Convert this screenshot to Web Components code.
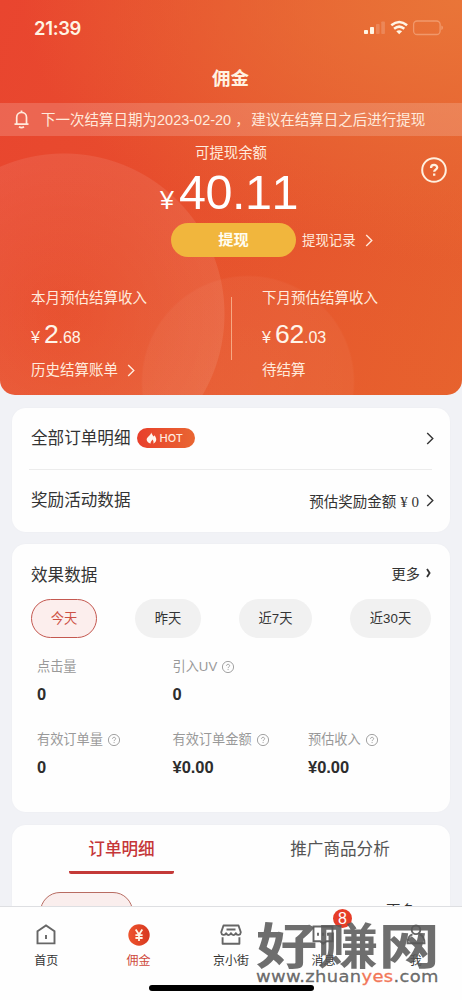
<!DOCTYPE html>
<html lang="zh-CN">
<head>
<meta charset="utf-8">
<title>佣金</title>
<style>
html,body{margin:0;padding:0;background:#f1f2f6}
body{font-family:"Liberation Sans","Noto Sans CJK SC",sans-serif;font-kerning:none;width:462px;height:1000px;overflow:hidden}
</style>
</head>
<body>
<commission-app></commission-app>
<script>
const define = (name, html) => {
  const t = document.createElement('template');
  t.innerHTML = html;
  customElements.define(name, class extends HTMLElement {
    constructor() {
      super();
      this.attachShadow({mode: 'open'}).append(t.content.cloneNode(true));
    }
  });
};

define('chevron-icon', `<style>:host{display:block;width:8px;height:14px;color:inherit}svg{display:block;width:100%;height:100%}</style>
<svg viewBox="0 0 8 14" fill="none" stroke="currentColor" stroke-width="1.5"><path d="M1 1l6 6-6 6"/></svg>`);

define('help-icon', `<style>:host{display:block;width:12px;height:12px}svg{display:block;width:100%;height:100%;overflow:visible}</style>
<svg viewBox="0 0 12 12" fill="none" stroke="#999" stroke-width=".9"><circle cx="6" cy="6" r="5.6"/><path d="M4.5 4.8c0-2 3.1-2 3.1-.1 0 1.2-1.5 1.2-1.5 2.4M6.1 8.1v1"/></svg>`);

define('status-bar', `<style>
:host{display:flex;height:56px;box-sizing:border-box;padding:0 19px 0 34px;align-items:center;justify-content:space-between;color:#fff5e4}
b{font:600 18.4px/24px Inter,sans-serif;letter-spacing:-.3px}
svg{display:block}
</style><b>21:39</b>
<svg width="80" height="16" viewBox="363 20 80 16" fill="none">
<g fill="#fff5e4"><rect x="364" y="30" width="4" height="4" rx=".8"/><rect x="370" y="27" width="4" height="7" rx=".8"/></g>
<g fill="#fff" opacity=".17"><rect x="376" y="24" width="3.6" height="10" rx=".8"/><rect x="381.300" y="21.500" width="3.600" height="12.500" rx=".8"/></g>
<g stroke="#fff5e4" stroke-width="2.500"><path d="M391.300 25.300q7.900-6.700 15.800 0"/><path d="M394.100 28.800q5.100-4.400 10.200 0"/></g><path d="M396.300 31.300q2.900-2.200 5.800 0l-2.900 2.900z" fill="#fff5e4"/>
<g opacity=".38"><rect x="413.600" y="21" width="26.500" height="13.500" rx="3.500" stroke="#ffd9c0" stroke-width="1.300"/><path d="M441.300 25.500q1.700.5 1.700 2.300t-1.700 2.300z" fill="#ffd9c0"/></g>
</svg>`);

define('notice-bar', `<style>
:host{display:flex;height:33px;align-items:center;padding-left:14px;background:rgba(255,255,255,.17);color:#ffeadc;font-size:14.500px;line-height:33px;white-space:pre}
svg{display:block;margin-right:12px}
span{padding-top:1px}
i{font-style:normal;display:inline-block;width:20px;text-indent:4px}
</style><svg width="15" height="19" viewBox="0 0 15 19" fill="none" stroke="#ffeadc" stroke-width="1.700"><path d="M2.700 14V7.200a4.900 4.900 0 0 1 9.800 0V14M.5 14.200h14M7.500.600v1.600M5 16.800q2.500 1.800 5 0"/></svg><span>下一次结算日期为2023-02-20<i>，</i>建议在结算日之后进行提现</span>`);

define('income-block', `<style>
:host{display:block;color:#ffebdd;font-size:14.500px}
.l,.f{line-height:20px;height:20px}
.n{display:flex;align-items:baseline;height:36px;line-height:36px;margin:8px 0;color:#fff5e9;font-size:16px}
.n span{margin-right:4px}
::slotted([slot=int]){font-size:26.500px;letter-spacing:-.2px}
::slotted([slot=dec]){font-size:16px}
.f{display:flex;align-items:center;gap:9px}
</style><div class="l"><slot name="label"></slot></div><div class="n"><span>¥</span><slot name="int"></slot><slot name="dec"></slot></div><div class="f"><slot name="foot"></slot></div>`);

define('balance-hero', `<style>
:host{display:block;height:395px;border-radius:0 0 15px 15px;overflow:hidden;color:#ffeadc;
background:radial-gradient(circle at 64px 314px,rgba(255,255,255,.02) 0,rgba(255,255,255,.085) 160px,transparent 161px),radial-gradient(circle at 248px 382px,rgba(255,255,255,.05) 0,rgba(255,255,255,.04) 105px,transparent 107px),linear-gradient(180deg,transparent 40%,rgba(235,110,40,.18) 100%),radial-gradient(ellipse 440px 260px at 100% 0,#e97538 0,rgba(233,103,50,0) 100%),linear-gradient(110deg,#e9452f 0,#e74c2d 35%,#e6552e 65%,#e6602f 100%)}
h1{margin:0;height:47px;font:600 18.500px/45px "Liberation Sans","Noto Sans CJK SC",sans-serif;text-align:center;color:#fff3e3;padding-right:1px}
.lab{height:18px;margin-top:8px;font-size:14.400px;line-height:18px;text-align:center}
.row{display:grid;grid-template-columns:160px 1fr 42px;height:54px;align-items:center;color:#fff}
.amt{display:flex;align-items:baseline;line-height:54px;font-size:48.500px;letter-spacing:-.5px;padding-top:3px}
.amt small{font-size:25px;width:19px}
.q{width:28px;height:28px;align-self:start;margin-top:-6px}
.act{display:flex;height:34px;margin:7px 0 0 171px;align-items:center;font-size:13.400px}
.act>span{margin-top:-2px}
button{width:125px;height:34px;padding:0 0 3px;border:0;border-radius:17px;background:#f1b63d;color:#fffdf0;font:600 15.200px/31px "Noto Sans CJK SC",sans-serif;margin-right:6px}
.act chevron-icon{margin-left:9px;height:13px}
.cols{display:grid;grid-template-columns:200px 1px 1fr;column-gap:0;margin-top:31px;padding-left:31px}
.cols hr{width:1px;height:63px;margin:9px 0 0;border:0;background:#ffd0ac;opacity:.65}
.cols income-block:last-child{margin-left:30px}
.cols chevron-icon{height:13px}
</style>
<status-bar></status-bar><h1>佣金</h1><notice-bar></notice-bar>
<div class="lab">可提现余额</div>
<div class="row"><span></span><div class="amt"><small>¥</small><span>40.11</span></div>
<svg class="q" viewBox="0 0 28 28" fill="none" stroke="#fff0df" stroke-width="2"><circle cx="14" cy="14" r="11.800"/><path stroke-width="2.300" d="M11 12c0-4.200 6.200-3.900 6.200-.500 0 2-3 2.300-3 4.300M14.200 17.500v2.200"/></svg></div>
<div class="act"><button>提现</button><span>提现记录</span><chevron-icon></chevron-icon></div>
<div class="cols"><income-block><span slot="label">本月预估结算收入</span><span slot="int">2</span><span slot="dec">.68</span><span slot="foot">历史结算账单</span><chevron-icon slot="foot"></chevron-icon></income-block><hr>
<income-block><span slot="label">下月预估结算收入</span><span slot="int">62</span><span slot="dec">.03</span><span slot="foot">待结算</span></income-block></div>`);

define('hot-badge', `<style>:host{display:flex;box-sizing:border-box;width:58px;height:20px;border-radius:10px;background:linear-gradient(90deg,#e83f2b,#e96632);color:#ffe9df;align-items:center;padding-left:9px;gap:3px;font:500 11px/20px Inter,sans-serif}svg{display:block}</style>
<svg width="11" height="12" viewBox="0 0 11 12"><path fill="#fff4ed" d="M5.200.500c.500 2.200 2 2.600 2.100 4.100.600-.300.900-.8 1-1.300 3.500 3.700 1.800 7.700-1.200 8.200 1.100-1.700.1-3-.8-4.100-.5 1.700-2 2-1.600 4.100C.900 10.700-.700 7.200 2 4.900 3.900 3.300 4.900 2.200 5.200.500z"/></svg><span>HOT</span>`);

define('ui-card', `<style>:host{display:block;box-sizing:border-box;margin:0 12px;border-radius:14px;background:#fefefe;box-shadow:0 0 3px rgba(0,0,0,.025)}</style><slot></slot>`);

define('entry-row', `<style>:host{display:flex;align-items:center;height:62px;color:#333;font-size:16.600px}
.t{display:flex;align-items:center;margin-top:-4px}
::slotted(hot-badge){position:relative;top:1px}
.r{display:flex;align-items:center;margin:-1px 0 0 auto;font-size:14.500px}chevron-icon{margin-left:7px;height:13px}</style>
<div class="t"><slot></slot></div><div class="r"><slot name="end"></slot><chevron-icon></chevron-icon></div>`);

define('stat-item', `<style>:host{display:block;height:73px}
.l{display:flex;align-items:center;gap:5px;height:20px;line-height:20px;font-size:13.200px;color:#999}
.v{font:700 16.500px/20px "Liberation Sans",sans-serif;color:#2d2d2d;margin-top:7px;letter-spacing:-.05px}</style>
<div class="l"><slot name="label"></slot></div><div class="v"><slot></slot></div>`);

define('effect-panel', `<style>
:host{display:block;padding:0 19px}
.h{display:flex;justify-content:space-between;align-items:center;height:34px;padding-top:13px;color:#333;font-size:16.600px}
.m{display:flex;align-items:center;gap:6px;font-size:14.200px;margin-top:-3px}
.p{display:flex;justify-content:space-between;margin-top:8px;font-size:13.300px;line-height:39px;color:#333;text-align:center}
.p span{height:39px;border-radius:20px;background:#f1f1f1}
.p .on{box-sizing:border-box;line-height:37px;border:1px solid #c45850;background:#fceeed;color:#cd5145}
.g{display:grid;grid-template-columns:135.500px 135.500px 1fr;margin:19px -6px 0 6px}
</style>
<div class="h"><span>效果数据</span><div class="m"><span>更多</span><svg width="5" height="10" viewBox="0 0 5 10" fill="none" stroke="#333" stroke-width="1.800"><path d="M1 1l2.600 4L1 9"/></svg></div></div>
<div class="p"><span class="on" style="width:66px">今天</span><span style="width:66px">昨天</span><span style="width:73px">近7天</span><span style="width:81px">近30天</span></div>
<div class="g">
<stat-item><span slot="label">点击量</span>0</stat-item><stat-item><span slot="label">引入UV</span><help-icon slot="label"></help-icon>0</stat-item><span></span>
<stat-item><span slot="label">有效订单量</span><help-icon slot="label"></help-icon>0</stat-item><stat-item><span slot="label">有效订单金额</span><help-icon slot="label"></help-icon>¥0.00</stat-item><stat-item><span slot="label">预估收入</span><help-icon slot="label"></help-icon>¥0.00</stat-item></div>`);

define('order-panel', `<style>
:host{display:block;height:81px;overflow:hidden}
.t{display:grid;grid-template-columns:1fr 1fr;height:49px;font-size:16.600px;text-align:center;color:#555;line-height:50px}
.t b{display:block;width:105px;margin-left:57px;color:#c53638;font-weight:500;height:49px;background:linear-gradient(#c43a38,#c43a38) 0 100%/100% 3.500px no-repeat;border-radius:0 0 2px 2px}
.b{display:flex;justify-content:space-between;padding:18px 35px 0 28px;font-size:14.500px;line-height:20px}
.b i{box-sizing:border-box;width:93px;height:40px;border:1px solid #b86c62;border-radius:20px;background:#faeeed}
.b span{margin:9px 0 0;color:#333}
</style><div class="t"><b>订单明细</b><span style="margin-right:1px">推广商品分析</span></div><div class="b"><i></i><span>更多</span></div>`);

define('tab-item', `<style>:host{display:flex;flex-direction:column;align-items:center;font-size:12px;line-height:18px;color:#333;padding-top:17px}
.i{height:22px;width:24px;margin-bottom:6px;position:relative}
::slotted([slot=badge]){position:absolute;left:21.500px;top:-15px;width:19px;height:19px;border-radius:50%;background:#e63d28;color:#fff;font:400 16px/19px "Liberation Sans",sans-serif;text-align:center}
::slotted(svg){display:block}</style><div class="i"><slot name="icon"></slot><slot name="badge"></slot></div><slot></slot>`);

define('tab-bar', `<style>
:host{display:grid;grid-template-columns:repeat(5,1fr);grid-template-rows:78px 6px;box-sizing:border-box;height:94px;border-top:1px solid #dedfe2;background:#fefefe}
.home{grid-column:1/6;width:165px;height:6px;border-radius:3px;background:#000;justify-self:center}
svg{fill:none;stroke:#666;stroke-width:1.900}
</style>
<tab-item><svg slot="icon" width="24" height="22" viewBox="0 0 24 22"><path d="M3.500 7.200L12 1.500l8.500 5.700v12.200h-17zM12 11v4"/></svg>首页</tab-item>
<tab-item style="color:#ce493b"><svg slot="icon" width="24" height="22" viewBox="0 0 24 22"><defs><linearGradient id="g"><stop stop-color="#ee542d"/><stop offset="1" stop-color="#d73820"/></linearGradient></defs><circle cx="12" cy="11" r="10.700" fill="url(#g)" stroke="none"/><path stroke="#fff7e8" stroke-width="1.800" d="M8.700 5.500l3.300 5 3.300-5M12 10v7M8.400 11.100h7.200M8.400 14h7.200"/></svg>佣金</tab-item>
<tab-item><svg slot="icon" width="24" height="22" viewBox="0 0 24 22" stroke-linejoin="round"><path d="M4.500 1.500h15l2.300 6.800c-.2 3-3.500 3.500-4.900.9-1.500 2.600-3.600 2.600-4.900 0-1.300 2.600-3.400 2.600-4.900 0-1.400 2.600-4.700 2.100-4.900-.9zM3.600 13.200v6.500h16.800v-6.500M7.500 5.500h9"/></svg>京小街</tab-item>
<tab-item><svg slot="icon" width="24" height="22" viewBox="0 0 24 22"><path d="M2.500 2.500h19v14.800h-6l-3.300 2.500-3-2.500H2.500zM7 8.700v3M12 8.700v3M17 8.700v3"/></svg><span slot="badge">8</span>消息</tab-item>
<tab-item><svg slot="icon" width="24" height="22" viewBox="0 0 24 22"><circle cx="12" cy="5.800" r="4.300"/><path d="M8.500 10.300C5 11.500 3.500 15 3.500 19.200h17c0-4.200-1.500-7.700-5-8.900"/></svg>我</tab-item>
<div class="home"></div>`);

define('site-mark', `<style>
:host{display:block;width:186px;height:64px;color:rgba(88,88,88,.87);white-space:nowrap}
.n{height:48px;font:700 49px/48px "Noto Sans CJK SC",sans-serif;transform:scaleX(1.25);transform-origin:0 0;width:147px}
.u{font:500 15.500px/16px "DejaVu Sans",sans-serif;letter-spacing:.3px;margin-top:2px;-webkit-text-stroke:.3px currentColor;transform:scaleX(1.155);transform-origin:0 0;width:158px}
.u span{color:#f27758}
</style><div class="n">好赚网</div><div class="u">www.zhuan<span>yes</span>.com</div>`);

define('commission-app', `<style>
:host{display:flex;flex-direction:column;width:462px;height:1000px;position:relative;overflow:hidden;background:#f1f2f6}
.a{height:124px;margin-top:13px;padding:0 16px 0 19px}
.line{height:1px;background:#ececec;margin:-1px 2px 0 -2px}
.a entry-row:last-child{height:62px}
.a hot-badge{margin-left:6px}
.e{height:268px;margin-top:12px}
.o{height:81px;margin-top:13px;border-radius:14px 14px 0 0}
.yen{font-family:"Liberation Serif",serif;font-size:15px}
site-mark{position:absolute;left:256px;top:919px}
</style>
<balance-hero></balance-hero>
<ui-card class="a"><entry-row>全部订单明细<hot-badge></hot-badge></entry-row><div class="line"></div><entry-row>奖励活动数据<span slot="end">预估奖励金额 <span class="yen">¥ 0</span></span></entry-row></ui-card>
<ui-card class="e"><effect-panel></effect-panel></ui-card>
<ui-card class="o"><order-panel></order-panel></ui-card>
<tab-bar></tab-bar><site-mark></site-mark>`);
</script>
</body>
</html>
